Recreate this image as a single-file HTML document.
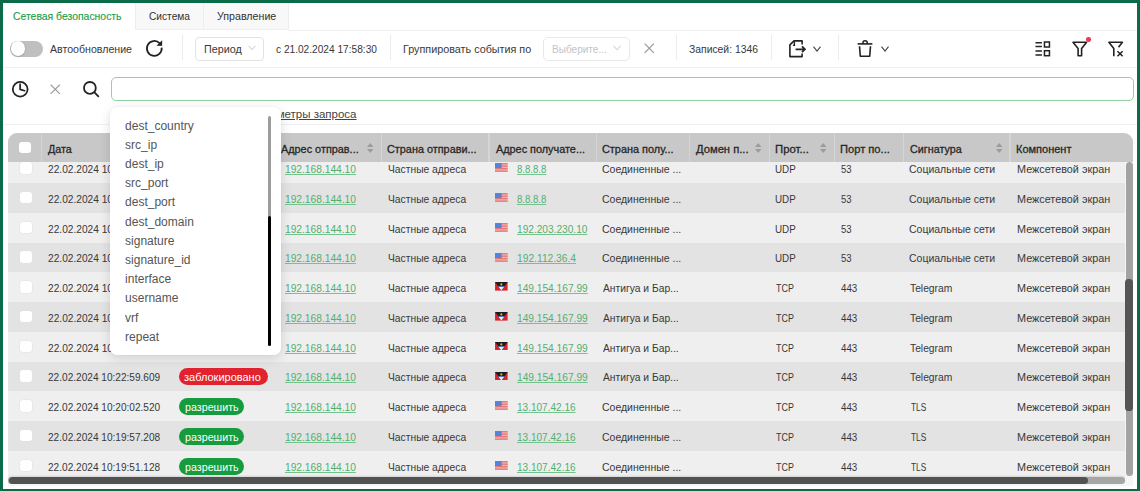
<!DOCTYPE html>
<html><head><meta charset="utf-8">
<style>
*{box-sizing:border-box}
html,body{margin:0;padding:0}
body{width:1140px;height:491px;overflow:hidden;position:relative;background:#fff;font-family:"Liberation Sans",sans-serif;color:#333;font-size:11px}
.t{position:absolute;white-space:pre}
.frame{position:absolute;left:0;top:0;width:1140px;height:491px;border-top:3px solid #0b6a47;border-left:3px solid #0b6a47;border-right:3px solid #0b6a47;border-bottom:2.5px solid #0b6a47;z-index:50}
.tab{position:absolute;top:3px;height:27px;background:#f8f8f8;border-left:1px solid #eeeeee;border-right:1px solid #eeeeee;border-bottom:1px solid #eeeeee}
.sep{position:absolute;width:1px;background:#ececec}
.hl{position:absolute;height:1px;background:#f0f0f0}
.ic{position:absolute;overflow:visible}
.tbl{position:absolute;left:8.4px;top:133.4px;width:1124.6px;height:352.6px;border-radius:9px 9px 0 0;overflow:hidden;background:#f4f4f4}
.hdr{position:absolute;left:8.4px;top:133.4px;width:1124.6px;height:28.6px;background:#c8c8c8;border-radius:9px 9px 0 0;z-index:4}
.row{position:absolute;left:8.4px;width:1117px;height:29.8px;z-index:1}
.cb{position:absolute;width:11.5px;height:11.5px;border-radius:3px;background:#fff;z-index:2;box-shadow:0 0 0 0.5px #e2e2e2}
.vs{position:absolute;top:133.4px;width:1.4px;height:28.6px;background:#d5d5d5;z-index:5}
.badge{position:absolute;height:17.3px;border-radius:9px;z-index:2}
.flag{position:absolute;z-index:2}
.sort{position:absolute;z-index:6}
.dd{position:absolute;left:110px;top:107px;width:170.5px;height:247.5px;background:#fff;border-radius:7px;box-shadow:0 3px 12px rgba(0,0,0,0.13),0 0 2px rgba(0,0,0,0.06);z-index:20}
</style></head>
<body>
<!-- tabs -->
<div class="tab" style="left:135px;width:68.5px"></div>
<div class="tab" style="left:203px;width:86px"></div>
<div class="hl" style="left:289px;top:29.5px;width:848px"></div>

<!-- toolbar row -->
<div style="position:absolute;left:9.9px;top:40.5px;width:33.4px;height:16.2px;border-radius:8.1px;background:#bfbfbf"></div>
<div style="position:absolute;left:10.8px;top:41.4px;width:14.3px;height:14.3px;border-radius:50%;background:#fff;box-shadow:0 0.5px 1.5px rgba(0,0,0,0.3)"></div>
<svg class="ic" style="left:145px;top:40.4px" width="18" height="18" viewBox="0 0 18 18"><path d="M16.67 7.6 A7.4 7.4 0 1 1 14.6 3.2" fill="none" stroke="#222" stroke-width="1.8"/><path d="M16.6 1.5 V5.3 H12.8 Z" fill="#222" stroke="#222" stroke-width="1.1" stroke-linejoin="miter"/></svg>
<div class="sep" style="left:181.5px;top:35px;height:25px"></div>
<div style="position:absolute;left:194.6px;top:36.5px;width:69.8px;height:24.2px;border:1px solid #e3e3e3;border-radius:4px"></div>
<svg class="ic" style="left:247.5px;top:45px" width="8" height="6" viewBox="0 0 8 6"><path d="M0.5 0.8 L4 4.6 L7.5 0.8" fill="none" stroke="#c4c4c4" stroke-width="1"/></svg>
<div class="sep" style="left:390.3px;top:35px;height:25px"></div>
<div style="position:absolute;left:542.5px;top:36.7px;width:87.4px;height:24.5px;border:1px solid #e8e8e8;border-radius:5px"></div>
<svg class="ic" style="left:612.6px;top:45px" width="8" height="6" viewBox="0 0 8 6"><path d="M0.5 0.8 L4 4.8 L7.5 0.8" fill="none" stroke="#c6c6c6" stroke-width="1"/></svg>
<svg class="ic" style="left:643.7px;top:43.4px" width="10.5" height="10.5" viewBox="0 0 10 10"><path d="M0.6 0.6 L9.4 9.4 M9.4 0.6 L0.6 9.4" fill="none" stroke="#9a9a9a" stroke-width="1.2"/></svg>
<div class="sep" style="left:676.3px;top:35px;height:25px"></div>
<div class="sep" style="left:770.5px;top:35px;height:25px"></div>
<!-- export icon -->
<svg class="ic" style="left:788.6px;top:40.2px" width="17.5" height="17.5" viewBox="0 0 17.5 17.5"><path d="M13.1 4.4 V0.9 H5 L0.9 4.8 V16.6 H13.1 V13.6" fill="none" stroke="#222" stroke-width="1.6" stroke-linejoin="round"/><path d="M5.4 1.6 V5.4 H3.9" fill="none" stroke="#222" stroke-width="1.4"/><path d="M6.6 9.3 H15.6 M13.0 6.4 L15.9 9.3 L13.0 12.2" fill="none" stroke="#222" stroke-width="1.8"/></svg>
<svg class="ic" style="left:812.8px;top:45.5px" width="8" height="6" viewBox="0 0 8 6"><path d="M0.5 0.6 L4 5.1 L7.5 0.6" fill="none" stroke="#444" stroke-width="1.1"/></svg>
<div class="sep" style="left:838.2px;top:35px;height:25px"></div>
<!-- trash icon -->
<svg class="ic" style="left:857px;top:40.3px" width="16" height="17.5" viewBox="0 0 16 17.5"><path d="M0.6 3.9 H15.4" fill="none" stroke="#222" stroke-width="1.6"/><path d="M5.9 3.8 V2.9 A2.2 2.2 0 0 1 10.3 2.9 V3.8" fill="none" stroke="#222" stroke-width="1.5"/><path d="M2.5 6.3 L3.3 16.2 H12.7 L13.5 6.3" fill="none" stroke="#222" stroke-width="1.6" stroke-linejoin="round"/></svg>
<svg class="ic" style="left:881px;top:45.5px" width="8" height="6" viewBox="0 0 8 6"><path d="M0.5 0.6 L4 5.1 L7.5 0.6" fill="none" stroke="#444" stroke-width="1.1"/></svg>
<!-- columns icon -->
<svg class="ic" style="left:1034.5px;top:41px" width="16" height="16" viewBox="0 0 16 16"><path d="M0.5 1.8 H6.9 M0.5 5.6 H6.9 M0.5 10 H6.9 M0.5 13.9 H6.9" fill="none" stroke="#222" stroke-width="1.5"/><rect x="9.45" y="1.0" width="5.0" height="5.0" fill="none" stroke="#222" stroke-width="1.5"/><rect x="9.45" y="9.7" width="5.0" height="5.0" fill="none" stroke="#222" stroke-width="1.5"/></svg>
<!-- filter icon -->
<svg class="ic" style="left:1071.8px;top:41px" width="16" height="16" viewBox="0 0 16 16"><path d="M1.0 1.3 H14.6 L9.6 7.5 V14.7 H6.1 V7.5 Z" fill="none" stroke="#222" stroke-width="1.6" stroke-linejoin="round"/></svg>
<div style="position:absolute;left:1086.4px;top:37.3px;width:4.5px;height:4.5px;border-radius:50%;background:#ec3b52"></div>
<!-- filter-x icon -->
<svg class="ic" style="left:1108.3px;top:41px" width="16" height="16" viewBox="0 0 16 16"><path d="M5.8 15.2 V7.5 L0.9 1.3 H14.4 L10.5 6.2" fill="none" stroke="#222" stroke-width="1.6" stroke-linejoin="round"/><path d="M9.5 10.3 L14.6 15.2 M14.6 10.3 L9.5 15.2" fill="none" stroke="#222" stroke-width="1.5"/></svg>
<div class="hl" style="left:3px;top:66.8px;width:1134px"></div>

<!-- search row -->
<svg class="ic" style="left:11px;top:80px" width="18" height="18" viewBox="0 0 18 18"><circle cx="9.2" cy="9.25" r="7.4" fill="none" stroke="#222" stroke-width="1.75"/><path d="M9.1 4.2 V9.4 L13.6 10.7" fill="none" stroke="#222" stroke-width="1.7" stroke-linecap="round" stroke-linejoin="round"/></svg>
<svg class="ic" style="left:50.2px;top:84.1px" width="10.5" height="10.5" viewBox="0 0 10 10"><path d="M0.6 0.6 L9.4 9.4 M9.4 0.6 L0.6 9.4" fill="none" stroke="#9a9a9a" stroke-width="1.2"/></svg>
<svg class="ic" style="left:82.8px;top:80.5px" width="17" height="17" viewBox="0 0 17 17"><circle cx="6.9" cy="6.9" r="5.9" fill="none" stroke="#222" stroke-width="1.8"/><path d="M11.2 11.2 L15.8 15.8" fill="none" stroke="#222" stroke-width="1.8"/></svg>
<div style="position:absolute;left:111.3px;top:77.2px;width:1023px;height:23.7px;border:1.5px solid #92d2a2;border-radius:5px"></div>
<div class="hl" style="left:3px;top:124px;width:1134px"></div>

<!-- table -->
<div class="tbl"></div>
<div class="hdr"></div>
<div class="cb" style="left:19.3px;top:141.8px;z-index:6;box-shadow:none"></div>
<div class="vs" style="left:40.8px"></div>
<div class="vs" style="left:380.6px"></div>
<div class="vs" style="left:488.3px"></div>
<div class="vs" style="left:595.8px"></div>
<div class="vs" style="left:688.6px"></div>
<div class="vs" style="left:768.5px"></div>
<div class="vs" style="left:833.8px"></div>
<div class="vs" style="left:902.6px"></div>
<div class="vs" style="left:1009.2px"></div>
<svg class="sort" style="left:367.2px;top:142.8px" width="6.5" height="10" viewBox="0 0 6.5 10"><polygon points="3.25,0 6.5,4 0,4" fill="#9b9b9b"/><polygon points="0,6 6.5,6 3.25,10" fill="#9b9b9b"/></svg>
<svg class="sort" style="left:754.7px;top:142.8px" width="6.5" height="10" viewBox="0 0 6.5 10"><polygon points="3.25,0 6.5,4 0,4" fill="#9b9b9b"/><polygon points="0,6 6.5,6 3.25,10" fill="#9b9b9b"/></svg>
<svg class="sort" style="left:819.6px;top:142.8px" width="6.5" height="10" viewBox="0 0 6.5 10"><polygon points="3.25,0 6.5,4 0,4" fill="#9b9b9b"/><polygon points="0,6 6.5,6 3.25,10" fill="#9b9b9b"/></svg>
<svg class="sort" style="left:995.6px;top:142.8px" width="6.5" height="10" viewBox="0 0 6.5 10"><polygon points="3.25,0 6.5,4 0,4" fill="#9b9b9b"/><polygon points="0,6 6.5,6 3.25,10" fill="#9b9b9b"/></svg>
<div class="row" style="top:153.30px;background:#efefef"></div>
<div class="cb" style="left:20px;top:162.18px"></div>
<svg class="flag" style="left:495.2px;top:163.38px" width="12.7" height="8.9" viewBox="0 0 19 13"><rect width="19" height="13" fill="#f2b4b2"/><rect y="0" width="19" height="1.9" fill="#e57676"/><rect y="3.7" width="19" height="1.9" fill="#e57676"/><rect y="7.4" width="19" height="1.9" fill="#e57676"/><rect y="11.1" width="19" height="1.9" fill="#e57676"/><rect width="10" height="7.4" fill="#5683da"/></svg>
<div class="row" style="top:183.05px;background:#e3e3e3"></div>
<div class="cb" style="left:20px;top:191.93px"></div>
<svg class="flag" style="left:495.2px;top:193.12px" width="12.7" height="8.9" viewBox="0 0 19 13"><rect width="19" height="13" fill="#f2b4b2"/><rect y="0" width="19" height="1.9" fill="#e57676"/><rect y="3.7" width="19" height="1.9" fill="#e57676"/><rect y="7.4" width="19" height="1.9" fill="#e57676"/><rect y="11.1" width="19" height="1.9" fill="#e57676"/><rect width="10" height="7.4" fill="#5683da"/></svg>
<div class="row" style="top:212.80px;background:#efefef"></div>
<div class="cb" style="left:20px;top:221.68px"></div>
<svg class="flag" style="left:495.2px;top:222.88px" width="12.7" height="8.9" viewBox="0 0 19 13"><rect width="19" height="13" fill="#f2b4b2"/><rect y="0" width="19" height="1.9" fill="#e57676"/><rect y="3.7" width="19" height="1.9" fill="#e57676"/><rect y="7.4" width="19" height="1.9" fill="#e57676"/><rect y="11.1" width="19" height="1.9" fill="#e57676"/><rect width="10" height="7.4" fill="#5683da"/></svg>
<div class="row" style="top:242.55px;background:#e3e3e3"></div>
<div class="cb" style="left:20px;top:251.43px"></div>
<svg class="flag" style="left:495.2px;top:252.62px" width="12.7" height="8.9" viewBox="0 0 19 13"><rect width="19" height="13" fill="#f2b4b2"/><rect y="0" width="19" height="1.9" fill="#e57676"/><rect y="3.7" width="19" height="1.9" fill="#e57676"/><rect y="7.4" width="19" height="1.9" fill="#e57676"/><rect y="11.1" width="19" height="1.9" fill="#e57676"/><rect width="10" height="7.4" fill="#5683da"/></svg>
<div class="row" style="top:272.30px;background:#efefef"></div>
<div class="cb" style="left:20px;top:281.18px"></div>
<svg class="flag" style="left:495.2px;top:282.38px" width="12.7" height="8.6" viewBox="0 0 19 13"><rect width="19" height="13" fill="#d9232c"/><polygon points="0,0 19,0 9.5,13" fill="#1e1e1e"/><polygon points="5.4,7.4 13.6,7.4 9.5,13" fill="#eeeeee"/><polygon points="4.4,6.0 14.6,6.0 13.6,7.4 5.4,7.4" fill="#4a78c8"/><circle cx="9.5" cy="3.6" r="1.6" fill="#e8b820"/></svg>
<div class="row" style="top:302.05px;background:#e3e3e3"></div>
<div class="cb" style="left:20px;top:310.93px"></div>
<svg class="flag" style="left:495.2px;top:312.12px" width="12.7" height="8.6" viewBox="0 0 19 13"><rect width="19" height="13" fill="#d9232c"/><polygon points="0,0 19,0 9.5,13" fill="#1e1e1e"/><polygon points="5.4,7.4 13.6,7.4 9.5,13" fill="#eeeeee"/><polygon points="4.4,6.0 14.6,6.0 13.6,7.4 5.4,7.4" fill="#4a78c8"/><circle cx="9.5" cy="3.6" r="1.6" fill="#e8b820"/></svg>
<div class="row" style="top:331.80px;background:#efefef"></div>
<div class="cb" style="left:20px;top:340.68px"></div>
<svg class="flag" style="left:495.2px;top:341.88px" width="12.7" height="8.6" viewBox="0 0 19 13"><rect width="19" height="13" fill="#d9232c"/><polygon points="0,0 19,0 9.5,13" fill="#1e1e1e"/><polygon points="5.4,7.4 13.6,7.4 9.5,13" fill="#eeeeee"/><polygon points="4.4,6.0 14.6,6.0 13.6,7.4 5.4,7.4" fill="#4a78c8"/><circle cx="9.5" cy="3.6" r="1.6" fill="#e8b820"/></svg>
<div class="row" style="top:361.55px;background:#e3e3e3"></div>
<div class="cb" style="left:20px;top:370.43px"></div>
<div class="badge" style="left:179.1px;top:368.15px;width:88.6px;background:#e1222f"></div>
<svg class="flag" style="left:495.2px;top:371.62px" width="12.7" height="8.6" viewBox="0 0 19 13"><rect width="19" height="13" fill="#d9232c"/><polygon points="0,0 19,0 9.5,13" fill="#1e1e1e"/><polygon points="5.4,7.4 13.6,7.4 9.5,13" fill="#eeeeee"/><polygon points="4.4,6.0 14.6,6.0 13.6,7.4 5.4,7.4" fill="#4a78c8"/><circle cx="9.5" cy="3.6" r="1.6" fill="#e8b820"/></svg>
<div class="row" style="top:391.30px;background:#efefef"></div>
<div class="cb" style="left:20px;top:400.18px"></div>
<div class="badge" style="left:179.1px;top:398.10px;width:65.4px;background:#179b3f"></div>
<svg class="flag" style="left:495.2px;top:401.38px" width="12.7" height="8.9" viewBox="0 0 19 13"><rect width="19" height="13" fill="#f2b4b2"/><rect y="0" width="19" height="1.9" fill="#e57676"/><rect y="3.7" width="19" height="1.9" fill="#e57676"/><rect y="7.4" width="19" height="1.9" fill="#e57676"/><rect y="11.1" width="19" height="1.9" fill="#e57676"/><rect width="10" height="7.4" fill="#5683da"/></svg>
<div class="row" style="top:421.05px;background:#e3e3e3"></div>
<div class="cb" style="left:20px;top:429.93px"></div>
<div class="badge" style="left:179.1px;top:427.85px;width:65.4px;background:#179b3f"></div>
<svg class="flag" style="left:495.2px;top:431.12px" width="12.7" height="8.9" viewBox="0 0 19 13"><rect width="19" height="13" fill="#f2b4b2"/><rect y="0" width="19" height="1.9" fill="#e57676"/><rect y="3.7" width="19" height="1.9" fill="#e57676"/><rect y="7.4" width="19" height="1.9" fill="#e57676"/><rect y="11.1" width="19" height="1.9" fill="#e57676"/><rect width="10" height="7.4" fill="#5683da"/></svg>
<div class="row" style="top:450.80px;background:#efefef"></div>
<div class="cb" style="left:20px;top:459.68px"></div>
<div class="badge" style="left:179.1px;top:457.60px;width:65.4px;background:#179b3f"></div>
<svg class="flag" style="left:495.2px;top:460.88px" width="12.7" height="8.9" viewBox="0 0 19 13"><rect width="19" height="13" fill="#f2b4b2"/><rect y="0" width="19" height="1.9" fill="#e57676"/><rect y="3.7" width="19" height="1.9" fill="#e57676"/><rect y="7.4" width="19" height="1.9" fill="#e57676"/><rect y="11.1" width="19" height="1.9" fill="#e57676"/><rect width="10" height="7.4" fill="#5683da"/></svg>
<!-- scrollbars -->
<div style="position:absolute;left:1124.8px;top:162px;width:8.2px;height:324px;background:#f6f6f6;z-index:3"></div>
<div style="position:absolute;left:1125.5px;top:162.3px;width:7px;height:314px;border-radius:3.5px;background:#a3a3a3;z-index:4"></div>
<div style="position:absolute;left:8.4px;top:480px;width:1117px;height:6px;background:#f6f6f6;z-index:3"></div>
<div style="position:absolute;left:8.4px;top:476.7px;width:1116.6px;height:7.1px;border-radius:3.5px;background:#a6a6a6;z-index:4;box-shadow:0 -1px 2px rgba(0,0,0,0.12)"></div>
<div style="position:absolute;left:8.8px;top:476.7px;width:1079.2px;height:7.1px;border-radius:3.5px;background:#525252;z-index:5"></div>
<div style="position:absolute;left:1125.4px;top:279px;width:7.2px;height:132.4px;border-radius:3.6px;background:#555;z-index:5"></div>

<!-- dropdown -->
<div class="dd"></div>
<div style="position:absolute;left:267.8px;top:115.6px;width:3.2px;height:130px;border-radius:1.6px;background:#9c9c9c;z-index:21"></div>
<div style="position:absolute;left:267.8px;top:215.7px;width:3.3px;height:130px;border-radius:1.6px;background:#000;z-index:22"></div>

<div class="t" style="left:13.04px;top:9.80px;font-size:11.5px;line-height:12px;color:#1f9d48;z-index:5;transform:scaleX(0.905);transform-origin:0 0;-webkit-text-stroke:0.15px #1f9d48">Сетевая безопасность</div>
<div class="t" style="left:50.25px;top:42.70px;font-size:11.5px;line-height:12px;color:#383838;z-index:5;transform:scaleX(0.9225);transform-origin:0 0">Автообновление</div>
<div class="t" style="left:203.81px;top:42.70px;font-size:11.5px;line-height:12px;color:#383838;z-index:5;transform:scaleX(0.9359);transform-origin:0 0">Период</div>
<div class="t" style="left:276.35px;top:42.70px;font-size:11.5px;line-height:12px;color:#383838;z-index:5;transform:scaleX(0.8816);transform-origin:0 0">с 21.02.2024 17:58:30</div>
<div class="t" style="left:402.91px;top:42.70px;font-size:11.5px;line-height:12px;color:#383838;z-index:5;transform:scaleX(0.9378);transform-origin:0 0">Группировать события по</div>
<div class="t" style="left:551.78px;top:42.70px;font-size:11.5px;line-height:12px;color:#c3c3c3;z-index:5;transform:scaleX(0.8738);transform-origin:0 0">Выберите...</div>
<div class="t" style="left:689.45px;top:42.70px;font-size:11.5px;line-height:12px;color:#383838;z-index:5;transform:scaleX(0.9013);transform-origin:0 0">Записей: 1346</div>
<div class="t" style="left:148.77px;top:9.60px;font-size:11.5px;line-height:12px;color:#333;z-index:5;transform:scaleX(0.8844);transform-origin:0 0">Система</div>
<div class="t" style="left:216.62px;top:9.60px;font-size:11.5px;line-height:12px;color:#333;z-index:5;transform:scaleX(0.927);transform-origin:0 0">Управление</div>
<div class="t" style="left:249.20px;top:107.80px;font-size:11.5px;line-height:12px;color:#444;z-index:5;text-decoration:underline">Параметры запроса</div>
<div class="t" style="left:48.35px;top:142.50px;font-size:11.5px;line-height:12px;color:#262626;z-index:5;transform:scaleX(0.936);transform-origin:0 0;-webkit-text-stroke:0.3px #262626">Дата</div>
<div class="t" style="left:281.45px;top:142.50px;font-size:11.5px;line-height:12px;color:#262626;z-index:5;transform:scaleX(0.9444);transform-origin:0 0;-webkit-text-stroke:0.3px #262626">Адрес отправ...</div>
<div class="t" style="left:387.21px;top:142.50px;font-size:11.5px;line-height:12px;color:#262626;z-index:5;transform:scaleX(0.9441);transform-origin:0 0;-webkit-text-stroke:0.3px #262626">Страна отправи...</div>
<div class="t" style="left:495.65px;top:142.50px;font-size:11.5px;line-height:12px;color:#262626;z-index:5;transform:scaleX(0.9441);transform-origin:0 0;-webkit-text-stroke:0.3px #262626">Адрес получате...</div>
<div class="t" style="left:602.20px;top:142.50px;font-size:11.5px;line-height:12px;color:#262626;z-index:5;transform:scaleX(0.9473);transform-origin:0 0;-webkit-text-stroke:0.3px #262626">Страна полу...</div>
<div class="t" style="left:695.95px;top:142.50px;font-size:11.5px;line-height:12px;color:#262626;z-index:5;transform:scaleX(0.9736);transform-origin:0 0;-webkit-text-stroke:0.3px #262626">Домен п...</div>
<div class="t" style="left:775.27px;top:142.50px;font-size:11.5px;line-height:12px;color:#262626;z-index:5;transform:scaleX(0.9848);transform-origin:0 0;-webkit-text-stroke:0.3px #262626">Прот...</div>
<div class="t" style="left:840.08px;top:142.50px;font-size:11.5px;line-height:12px;color:#262626;z-index:5;transform:scaleX(0.968);transform-origin:0 0;-webkit-text-stroke:0.3px #262626">Порт по...</div>
<div class="t" style="left:909.51px;top:142.50px;font-size:11.5px;line-height:12px;color:#262626;z-index:5;transform:scaleX(0.9352);transform-origin:0 0;-webkit-text-stroke:0.3px #262626">Сигнатура</div>
<div class="t" style="left:1016.49px;top:142.50px;font-size:11.5px;line-height:12px;color:#262626;z-index:5;transform:scaleX(0.9561);transform-origin:0 0;-webkit-text-stroke:0.3px #262626">Компонент</div>
<div class="t" style="left:48.47px;top:163.10px;font-size:11.5px;line-height:12px;color:#383838;z-index:5;transform:scaleX(0.8841);transform-origin:0 0">22.02.2024 10:23:20.001</div>
<div class="t" style="left:284.86px;top:163.10px;font-size:11.5px;line-height:12px;color:#52b06f;z-index:5;transform:scaleX(0.8873);transform-origin:0 0;text-decoration:underline;text-decoration-color:#76c28f">192.168.144.10</div>
<div class="t" style="left:387.55px;top:163.10px;font-size:11.5px;line-height:12px;color:#383838;z-index:5;transform:scaleX(0.8953);transform-origin:0 0">Частные адреса</div>
<div class="t" style="left:516.95px;top:163.10px;font-size:11.5px;line-height:12px;color:#52b06f;z-index:5;transform:scaleX(0.8343);transform-origin:0 0;text-decoration:underline;text-decoration-color:#76c28f">8.8.8.8</div>
<div class="t" style="left:602.24px;top:163.10px;font-size:11.5px;line-height:12px;color:#383838;z-index:5;transform:scaleX(0.9118);transform-origin:0 0">Соединенные ...</div>
<div class="t" style="left:775.10px;top:163.10px;font-size:11.5px;line-height:12px;color:#383838;z-index:5;transform:scaleX(0.8522);transform-origin:0 0">UDP</div>
<div class="t" style="left:840.62px;top:163.10px;font-size:11.5px;line-height:12px;color:#383838;z-index:5;transform:scaleX(0.825);transform-origin:0 0">53</div>
<div class="t" style="left:908.94px;top:163.10px;font-size:11.5px;line-height:12px;color:#383838;z-index:5;transform:scaleX(0.9108);transform-origin:0 0">Социальные сети</div>
<div class="t" style="left:1016.51px;top:163.10px;font-size:11.5px;line-height:12px;color:#383838;z-index:5;transform:scaleX(0.9408);transform-origin:0 0">Межсетевой экран</div>
<div class="t" style="left:48.47px;top:192.85px;font-size:11.5px;line-height:12px;color:#383838;z-index:5;transform:scaleX(0.8841);transform-origin:0 0">22.02.2024 10:23:19.001</div>
<div class="t" style="left:284.86px;top:192.85px;font-size:11.5px;line-height:12px;color:#52b06f;z-index:5;transform:scaleX(0.8873);transform-origin:0 0;text-decoration:underline;text-decoration-color:#76c28f">192.168.144.10</div>
<div class="t" style="left:387.55px;top:192.85px;font-size:11.5px;line-height:12px;color:#383838;z-index:5;transform:scaleX(0.8953);transform-origin:0 0">Частные адреса</div>
<div class="t" style="left:516.95px;top:192.85px;font-size:11.5px;line-height:12px;color:#52b06f;z-index:5;transform:scaleX(0.8343);transform-origin:0 0;text-decoration:underline;text-decoration-color:#76c28f">8.8.8.8</div>
<div class="t" style="left:602.24px;top:192.85px;font-size:11.5px;line-height:12px;color:#383838;z-index:5;transform:scaleX(0.9118);transform-origin:0 0">Соединенные ...</div>
<div class="t" style="left:775.10px;top:192.85px;font-size:11.5px;line-height:12px;color:#383838;z-index:5;transform:scaleX(0.8522);transform-origin:0 0">UDP</div>
<div class="t" style="left:840.62px;top:192.85px;font-size:11.5px;line-height:12px;color:#383838;z-index:5;transform:scaleX(0.825);transform-origin:0 0">53</div>
<div class="t" style="left:908.94px;top:192.85px;font-size:11.5px;line-height:12px;color:#383838;z-index:5;transform:scaleX(0.9108);transform-origin:0 0">Социальные сети</div>
<div class="t" style="left:1016.51px;top:192.85px;font-size:11.5px;line-height:12px;color:#383838;z-index:5;transform:scaleX(0.9408);transform-origin:0 0">Межсетевой экран</div>
<div class="t" style="left:48.47px;top:222.60px;font-size:11.5px;line-height:12px;color:#383838;z-index:5;transform:scaleX(0.8841);transform-origin:0 0">22.02.2024 10:23:18.001</div>
<div class="t" style="left:284.86px;top:222.60px;font-size:11.5px;line-height:12px;color:#52b06f;z-index:5;transform:scaleX(0.8873);transform-origin:0 0;text-decoration:underline;text-decoration-color:#76c28f">192.168.144.10</div>
<div class="t" style="left:387.55px;top:222.60px;font-size:11.5px;line-height:12px;color:#383838;z-index:5;transform:scaleX(0.8953);transform-origin:0 0">Частные адреса</div>
<div class="t" style="left:516.57px;top:222.60px;font-size:11.5px;line-height:12px;color:#52b06f;z-index:5;transform:scaleX(0.881);transform-origin:0 0;text-decoration:underline;text-decoration-color:#76c28f">192.203.230.10</div>
<div class="t" style="left:602.24px;top:222.60px;font-size:11.5px;line-height:12px;color:#383838;z-index:5;transform:scaleX(0.9118);transform-origin:0 0">Соединенные ...</div>
<div class="t" style="left:775.10px;top:222.60px;font-size:11.5px;line-height:12px;color:#383838;z-index:5;transform:scaleX(0.8522);transform-origin:0 0">UDP</div>
<div class="t" style="left:840.62px;top:222.60px;font-size:11.5px;line-height:12px;color:#383838;z-index:5;transform:scaleX(0.825);transform-origin:0 0">53</div>
<div class="t" style="left:908.94px;top:222.60px;font-size:11.5px;line-height:12px;color:#383838;z-index:5;transform:scaleX(0.9108);transform-origin:0 0">Социальные сети</div>
<div class="t" style="left:1016.51px;top:222.60px;font-size:11.5px;line-height:12px;color:#383838;z-index:5;transform:scaleX(0.9408);transform-origin:0 0">Межсетевой экран</div>
<div class="t" style="left:48.47px;top:252.35px;font-size:11.5px;line-height:12px;color:#383838;z-index:5;transform:scaleX(0.8841);transform-origin:0 0">22.02.2024 10:23:17.001</div>
<div class="t" style="left:284.86px;top:252.35px;font-size:11.5px;line-height:12px;color:#52b06f;z-index:5;transform:scaleX(0.8873);transform-origin:0 0;text-decoration:underline;text-decoration-color:#76c28f">192.168.144.10</div>
<div class="t" style="left:387.55px;top:252.35px;font-size:11.5px;line-height:12px;color:#383838;z-index:5;transform:scaleX(0.8953);transform-origin:0 0">Частные адреса</div>
<div class="t" style="left:516.56px;top:252.35px;font-size:11.5px;line-height:12px;color:#52b06f;z-index:5;transform:scaleX(0.8908);transform-origin:0 0;text-decoration:underline;text-decoration-color:#76c28f">192.112.36.4</div>
<div class="t" style="left:602.24px;top:252.35px;font-size:11.5px;line-height:12px;color:#383838;z-index:5;transform:scaleX(0.9118);transform-origin:0 0">Соединенные ...</div>
<div class="t" style="left:775.10px;top:252.35px;font-size:11.5px;line-height:12px;color:#383838;z-index:5;transform:scaleX(0.8522);transform-origin:0 0">UDP</div>
<div class="t" style="left:840.62px;top:252.35px;font-size:11.5px;line-height:12px;color:#383838;z-index:5;transform:scaleX(0.825);transform-origin:0 0">53</div>
<div class="t" style="left:908.94px;top:252.35px;font-size:11.5px;line-height:12px;color:#383838;z-index:5;transform:scaleX(0.9108);transform-origin:0 0">Социальные сети</div>
<div class="t" style="left:1016.51px;top:252.35px;font-size:11.5px;line-height:12px;color:#383838;z-index:5;transform:scaleX(0.9408);transform-origin:0 0">Межсетевой экран</div>
<div class="t" style="left:48.47px;top:282.10px;font-size:11.5px;line-height:12px;color:#383838;z-index:5;transform:scaleX(0.8841);transform-origin:0 0">22.02.2024 10:23:16.001</div>
<div class="t" style="left:284.86px;top:282.10px;font-size:11.5px;line-height:12px;color:#52b06f;z-index:5;transform:scaleX(0.8873);transform-origin:0 0;text-decoration:underline;text-decoration-color:#76c28f">192.168.144.10</div>
<div class="t" style="left:387.55px;top:282.10px;font-size:11.5px;line-height:12px;color:#383838;z-index:5;transform:scaleX(0.8953);transform-origin:0 0">Частные адреса</div>
<div class="t" style="left:516.57px;top:282.10px;font-size:11.5px;line-height:12px;color:#52b06f;z-index:5;transform:scaleX(0.8848);transform-origin:0 0;text-decoration:underline;text-decoration-color:#76c28f">149.154.167.99</div>
<div class="t" style="left:603.15px;top:282.10px;font-size:11.5px;line-height:12px;color:#383838;z-index:5;transform:scaleX(0.894);transform-origin:0 0">Антигуа и Бар...</div>
<div class="t" style="left:775.75px;top:282.10px;font-size:11.5px;line-height:12px;color:#383838;z-index:5;transform:scaleX(0.7773);transform-origin:0 0">TCP</div>
<div class="t" style="left:840.85px;top:282.10px;font-size:11.5px;line-height:12px;color:#383838;z-index:5;transform:scaleX(0.8474);transform-origin:0 0">443</div>
<div class="t" style="left:910.25px;top:282.10px;font-size:11.5px;line-height:12px;color:#383838;z-index:5;transform:scaleX(0.8936);transform-origin:0 0">Telegram</div>
<div class="t" style="left:1016.51px;top:282.10px;font-size:11.5px;line-height:12px;color:#383838;z-index:5;transform:scaleX(0.9408);transform-origin:0 0">Межсетевой экран</div>
<div class="t" style="left:48.47px;top:311.85px;font-size:11.5px;line-height:12px;color:#383838;z-index:5;transform:scaleX(0.8841);transform-origin:0 0">22.02.2024 10:23:15.001</div>
<div class="t" style="left:284.86px;top:311.85px;font-size:11.5px;line-height:12px;color:#52b06f;z-index:5;transform:scaleX(0.8873);transform-origin:0 0;text-decoration:underline;text-decoration-color:#76c28f">192.168.144.10</div>
<div class="t" style="left:387.55px;top:311.85px;font-size:11.5px;line-height:12px;color:#383838;z-index:5;transform:scaleX(0.8953);transform-origin:0 0">Частные адреса</div>
<div class="t" style="left:516.57px;top:311.85px;font-size:11.5px;line-height:12px;color:#52b06f;z-index:5;transform:scaleX(0.8848);transform-origin:0 0;text-decoration:underline;text-decoration-color:#76c28f">149.154.167.99</div>
<div class="t" style="left:603.15px;top:311.85px;font-size:11.5px;line-height:12px;color:#383838;z-index:5;transform:scaleX(0.894);transform-origin:0 0">Антигуа и Бар...</div>
<div class="t" style="left:775.75px;top:311.85px;font-size:11.5px;line-height:12px;color:#383838;z-index:5;transform:scaleX(0.7773);transform-origin:0 0">TCP</div>
<div class="t" style="left:840.85px;top:311.85px;font-size:11.5px;line-height:12px;color:#383838;z-index:5;transform:scaleX(0.8474);transform-origin:0 0">443</div>
<div class="t" style="left:910.25px;top:311.85px;font-size:11.5px;line-height:12px;color:#383838;z-index:5;transform:scaleX(0.8936);transform-origin:0 0">Telegram</div>
<div class="t" style="left:1016.51px;top:311.85px;font-size:11.5px;line-height:12px;color:#383838;z-index:5;transform:scaleX(0.9408);transform-origin:0 0">Межсетевой экран</div>
<div class="t" style="left:48.47px;top:341.60px;font-size:11.5px;line-height:12px;color:#383838;z-index:5;transform:scaleX(0.8841);transform-origin:0 0">22.02.2024 10:23:14.001</div>
<div class="t" style="left:284.86px;top:341.60px;font-size:11.5px;line-height:12px;color:#52b06f;z-index:5;transform:scaleX(0.8873);transform-origin:0 0;text-decoration:underline;text-decoration-color:#76c28f">192.168.144.10</div>
<div class="t" style="left:387.55px;top:341.60px;font-size:11.5px;line-height:12px;color:#383838;z-index:5;transform:scaleX(0.8953);transform-origin:0 0">Частные адреса</div>
<div class="t" style="left:516.57px;top:341.60px;font-size:11.5px;line-height:12px;color:#52b06f;z-index:5;transform:scaleX(0.8848);transform-origin:0 0;text-decoration:underline;text-decoration-color:#76c28f">149.154.167.99</div>
<div class="t" style="left:603.15px;top:341.60px;font-size:11.5px;line-height:12px;color:#383838;z-index:5;transform:scaleX(0.894);transform-origin:0 0">Антигуа и Бар...</div>
<div class="t" style="left:775.75px;top:341.60px;font-size:11.5px;line-height:12px;color:#383838;z-index:5;transform:scaleX(0.7773);transform-origin:0 0">TCP</div>
<div class="t" style="left:840.85px;top:341.60px;font-size:11.5px;line-height:12px;color:#383838;z-index:5;transform:scaleX(0.8474);transform-origin:0 0">443</div>
<div class="t" style="left:910.25px;top:341.60px;font-size:11.5px;line-height:12px;color:#383838;z-index:5;transform:scaleX(0.8936);transform-origin:0 0">Telegram</div>
<div class="t" style="left:1016.51px;top:341.60px;font-size:11.5px;line-height:12px;color:#383838;z-index:5;transform:scaleX(0.9408);transform-origin:0 0">Межсетевой экран</div>
<div class="t" style="left:48.47px;top:371.35px;font-size:11.5px;line-height:12px;color:#383838;z-index:5;transform:scaleX(0.8772);transform-origin:0 0">22.02.2024 10:22:59.609</div>
<div class="t" style="left:284.86px;top:371.35px;font-size:11.5px;line-height:12px;color:#52b06f;z-index:5;transform:scaleX(0.8873);transform-origin:0 0;text-decoration:underline;text-decoration-color:#76c28f">192.168.144.10</div>
<div class="t" style="left:387.55px;top:371.35px;font-size:11.5px;line-height:12px;color:#383838;z-index:5;transform:scaleX(0.8953);transform-origin:0 0">Частные адреса</div>
<div class="t" style="left:516.57px;top:371.35px;font-size:11.5px;line-height:12px;color:#52b06f;z-index:5;transform:scaleX(0.8848);transform-origin:0 0;text-decoration:underline;text-decoration-color:#76c28f">149.154.167.99</div>
<div class="t" style="left:603.15px;top:371.35px;font-size:11.5px;line-height:12px;color:#383838;z-index:5;transform:scaleX(0.894);transform-origin:0 0">Антигуа и Бар...</div>
<div class="t" style="left:775.75px;top:371.35px;font-size:11.5px;line-height:12px;color:#383838;z-index:5;transform:scaleX(0.7773);transform-origin:0 0">TCP</div>
<div class="t" style="left:840.85px;top:371.35px;font-size:11.5px;line-height:12px;color:#383838;z-index:5;transform:scaleX(0.8474);transform-origin:0 0">443</div>
<div class="t" style="left:910.25px;top:371.35px;font-size:11.5px;line-height:12px;color:#383838;z-index:5;transform:scaleX(0.8936);transform-origin:0 0">Telegram</div>
<div class="t" style="left:1016.51px;top:371.35px;font-size:11.5px;line-height:12px;color:#383838;z-index:5;transform:scaleX(0.9408);transform-origin:0 0">Межсетевой экран</div>
<div class="t" style="left:184.49px;top:371.35px;font-size:11.5px;line-height:12px;color:#fff;z-index:5;transform:scaleX(0.9557);transform-origin:0 0">заблокировано</div>
<div class="t" style="left:48.47px;top:401.10px;font-size:11.5px;line-height:12px;color:#383838;z-index:5;transform:scaleX(0.8772);transform-origin:0 0">22.02.2024 10:20:02.520</div>
<div class="t" style="left:284.86px;top:401.10px;font-size:11.5px;line-height:12px;color:#52b06f;z-index:5;transform:scaleX(0.8873);transform-origin:0 0;text-decoration:underline;text-decoration-color:#76c28f">192.168.144.10</div>
<div class="t" style="left:387.55px;top:401.10px;font-size:11.5px;line-height:12px;color:#383838;z-index:5;transform:scaleX(0.8953);transform-origin:0 0">Частные адреса</div>
<div class="t" style="left:516.58px;top:401.10px;font-size:11.5px;line-height:12px;color:#52b06f;z-index:5;transform:scaleX(0.8727);transform-origin:0 0;text-decoration:underline;text-decoration-color:#76c28f">13.107.42.16</div>
<div class="t" style="left:602.24px;top:401.10px;font-size:11.5px;line-height:12px;color:#383838;z-index:5;transform:scaleX(0.9118);transform-origin:0 0">Соединенные ...</div>
<div class="t" style="left:775.75px;top:401.10px;font-size:11.5px;line-height:12px;color:#383838;z-index:5;transform:scaleX(0.7773);transform-origin:0 0">TCP</div>
<div class="t" style="left:840.85px;top:401.10px;font-size:11.5px;line-height:12px;color:#383838;z-index:5;transform:scaleX(0.8474);transform-origin:0 0">443</div>
<div class="t" style="left:910.55px;top:401.10px;font-size:11.5px;line-height:12px;color:#383838;z-index:5;transform:scaleX(0.7238);transform-origin:0 0">TLS</div>
<div class="t" style="left:1016.51px;top:401.10px;font-size:11.5px;line-height:12px;color:#383838;z-index:5;transform:scaleX(0.9408);transform-origin:0 0">Межсетевой экран</div>
<div class="t" style="left:185.02px;top:401.10px;font-size:11.5px;line-height:12px;color:#fff;z-index:5;transform:scaleX(0.9304);transform-origin:0 0">разрешить</div>
<div class="t" style="left:48.47px;top:430.85px;font-size:11.5px;line-height:12px;color:#383838;z-index:5;transform:scaleX(0.8772);transform-origin:0 0">22.02.2024 10:19:57.208</div>
<div class="t" style="left:284.86px;top:430.85px;font-size:11.5px;line-height:12px;color:#52b06f;z-index:5;transform:scaleX(0.8873);transform-origin:0 0;text-decoration:underline;text-decoration-color:#76c28f">192.168.144.10</div>
<div class="t" style="left:387.55px;top:430.85px;font-size:11.5px;line-height:12px;color:#383838;z-index:5;transform:scaleX(0.8953);transform-origin:0 0">Частные адреса</div>
<div class="t" style="left:516.58px;top:430.85px;font-size:11.5px;line-height:12px;color:#52b06f;z-index:5;transform:scaleX(0.8727);transform-origin:0 0;text-decoration:underline;text-decoration-color:#76c28f">13.107.42.16</div>
<div class="t" style="left:602.24px;top:430.85px;font-size:11.5px;line-height:12px;color:#383838;z-index:5;transform:scaleX(0.9118);transform-origin:0 0">Соединенные ...</div>
<div class="t" style="left:775.75px;top:430.85px;font-size:11.5px;line-height:12px;color:#383838;z-index:5;transform:scaleX(0.7773);transform-origin:0 0">TCP</div>
<div class="t" style="left:840.85px;top:430.85px;font-size:11.5px;line-height:12px;color:#383838;z-index:5;transform:scaleX(0.8474);transform-origin:0 0">443</div>
<div class="t" style="left:910.55px;top:430.85px;font-size:11.5px;line-height:12px;color:#383838;z-index:5;transform:scaleX(0.7238);transform-origin:0 0">TLS</div>
<div class="t" style="left:1016.51px;top:430.85px;font-size:11.5px;line-height:12px;color:#383838;z-index:5;transform:scaleX(0.9408);transform-origin:0 0">Межсетевой экран</div>
<div class="t" style="left:185.02px;top:430.85px;font-size:11.5px;line-height:12px;color:#fff;z-index:5;transform:scaleX(0.9304);transform-origin:0 0">разрешить</div>
<div class="t" style="left:48.47px;top:460.60px;font-size:11.5px;line-height:12px;color:#383838;z-index:5;transform:scaleX(0.8772);transform-origin:0 0">22.02.2024 10:19:51.128</div>
<div class="t" style="left:284.86px;top:460.60px;font-size:11.5px;line-height:12px;color:#52b06f;z-index:5;transform:scaleX(0.8873);transform-origin:0 0;text-decoration:underline;text-decoration-color:#76c28f">192.168.144.10</div>
<div class="t" style="left:387.55px;top:460.60px;font-size:11.5px;line-height:12px;color:#383838;z-index:5;transform:scaleX(0.8953);transform-origin:0 0">Частные адреса</div>
<div class="t" style="left:516.58px;top:460.60px;font-size:11.5px;line-height:12px;color:#52b06f;z-index:5;transform:scaleX(0.8727);transform-origin:0 0;text-decoration:underline;text-decoration-color:#76c28f">13.107.42.16</div>
<div class="t" style="left:602.24px;top:460.60px;font-size:11.5px;line-height:12px;color:#383838;z-index:5;transform:scaleX(0.9118);transform-origin:0 0">Соединенные ...</div>
<div class="t" style="left:775.75px;top:460.60px;font-size:11.5px;line-height:12px;color:#383838;z-index:5;transform:scaleX(0.7773);transform-origin:0 0">TCP</div>
<div class="t" style="left:840.85px;top:460.60px;font-size:11.5px;line-height:12px;color:#383838;z-index:5;transform:scaleX(0.8474);transform-origin:0 0">443</div>
<div class="t" style="left:910.55px;top:460.60px;font-size:11.5px;line-height:12px;color:#383838;z-index:5;transform:scaleX(0.7238);transform-origin:0 0">TLS</div>
<div class="t" style="left:1016.51px;top:460.60px;font-size:11.5px;line-height:12px;color:#383838;z-index:5;transform:scaleX(0.9408);transform-origin:0 0">Межсетевой экран</div>
<div class="t" style="left:185.02px;top:460.60px;font-size:11.5px;line-height:12px;color:#fff;z-index:5;transform:scaleX(0.9304);transform-origin:0 0">разрешить</div>
<div class="t" style="left:125.10px;top:118.60px;font-size:12px;line-height:14px;color:#555555;z-index:21">dest_country</div>
<div class="t" style="left:125.10px;top:137.80px;font-size:12px;line-height:14px;color:#555555;z-index:21">src_ip</div>
<div class="t" style="left:125.10px;top:157.00px;font-size:12px;line-height:14px;color:#555555;z-index:21">dest_ip</div>
<div class="t" style="left:125.10px;top:176.20px;font-size:12px;line-height:14px;color:#555555;z-index:21">src_port</div>
<div class="t" style="left:125.10px;top:195.40px;font-size:12px;line-height:14px;color:#555555;z-index:21">dest_port</div>
<div class="t" style="left:125.10px;top:214.60px;font-size:12px;line-height:14px;color:#555555;z-index:21">dest_domain</div>
<div class="t" style="left:125.10px;top:233.80px;font-size:12px;line-height:14px;color:#555555;z-index:21">signature</div>
<div class="t" style="left:125.10px;top:253.00px;font-size:12px;line-height:14px;color:#555555;z-index:21">signature_id</div>
<div class="t" style="left:125.10px;top:272.20px;font-size:12px;line-height:14px;color:#555555;z-index:21">interface</div>
<div class="t" style="left:125.10px;top:291.40px;font-size:12px;line-height:14px;color:#555555;z-index:21">username</div>
<div class="t" style="left:125.10px;top:310.60px;font-size:12px;line-height:14px;color:#555555;z-index:21">vrf</div>
<div class="t" style="left:125.10px;top:329.80px;font-size:12px;line-height:14px;color:#555555;z-index:21">repeat</div>
<div class="frame"></div>
</body></html>
